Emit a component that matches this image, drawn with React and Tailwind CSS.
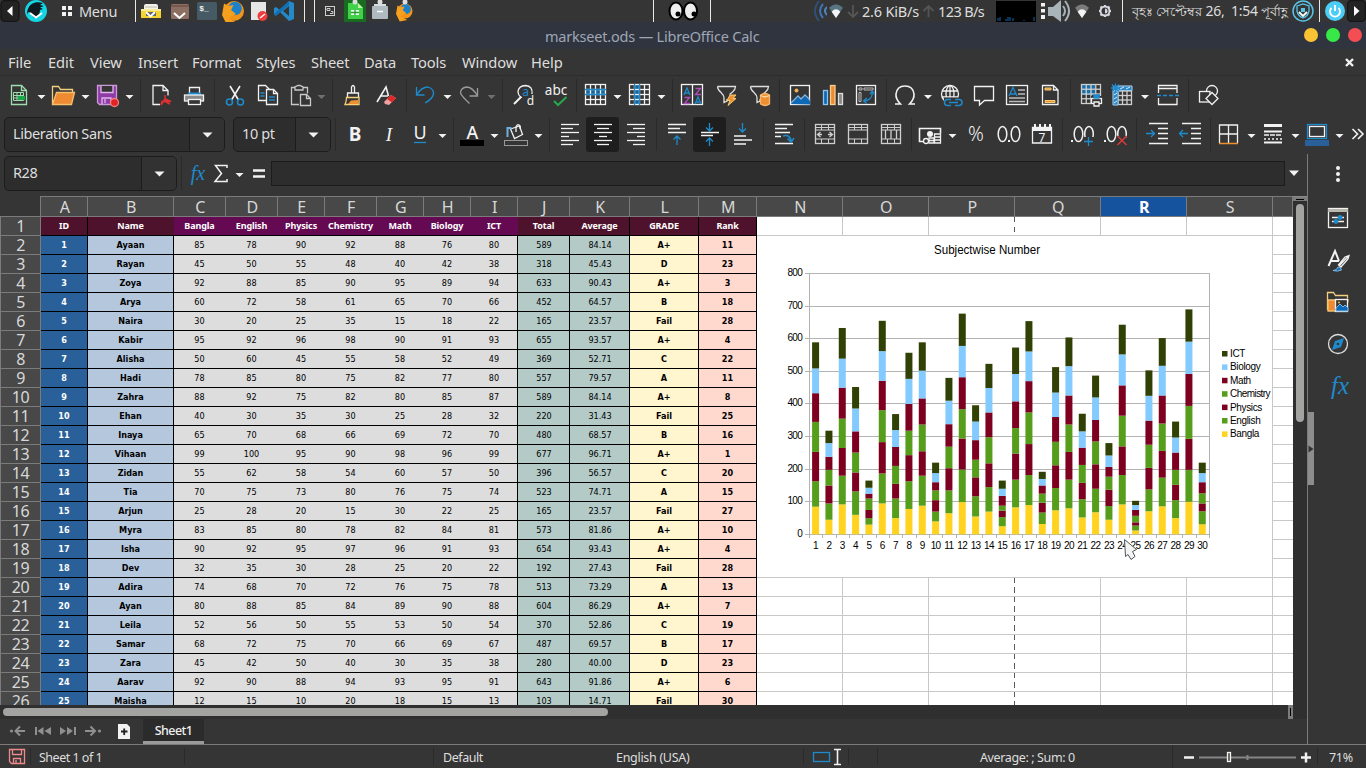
import React from "react";

const W = "#f2f2f2";
const B = "#1e8bcd";

/* A run of adjacent toolbar slots. Every slot ends at its `to` value and the
   drawings inside share the strip's coordinate system. */
function Strip({ from, top, h, items }) {
  let x = from;
  return (
    <div className="flex shrink-0">
      {items.map(([to, node], i) => {
        const start = x;
        x = to;
        return (
          <svg
            key={i}
            className="block shrink-0"
            width={to - start}
            height={h}
            viewBox={`${start} ${top} ${to - start} ${h}`}
            fill="none"
            stroke={W}
            strokeWidth="1.3"
          >
            {node}
          </svg>
        );
      })}
    </div>
  );
}

const Drop = ({ x, y = 96, c = W }) => (
  <path d={`M${x - 4} ${y - 1}h8l-4 4z`} fill={c} stroke="none" />
);
const Sep = ({ x, y, h }) => (
  <path d={`M${x + 0.5} ${y}v${h}`} stroke="#2a2a2a" strokeWidth="1" />
);
const T = ({ x, y, s, c = W, children, w = 400, f = "Noto Sans", ...p }) => (
  <text x={x} y={y} fontSize={s} fill={c} stroke="none" fontWeight={w} fontFamily={`"${f}", sans-serif`} textAnchor="middle" {...p}>
    {children}
  </text>
);
const sep1 = (x) => <Sep x={x} y={79} h={33} />;
const sep2 = (x) => <Sep x={x} y={118} h={33} />;

/* ---------- desktop panel ---------- */
const PSep = ({ x }) => <path d={`M${x + 0.5} 0v22`} stroke="#e8e8e8" strokeWidth="1" />;
const Firefox = ({ x, y, r }) => (
  <g stroke="none">
    <circle cx={x} cy={y} r={r} fill="#f39318" />
    <circle cx={x + r * 0.1} cy={y - r * 0.25} r={r * 0.68} fill="#1d80c8" />
    <path d={`M${x - r} ${y - r * 0.75}l${r * 0.45} ${r * 0.25} ${r * 0.5} -${r * 0.1} -${r * 0.25} ${r * 0.5} ${r * 0.5} ${r * 0.4} -${r * 0.8} ${r * 0.4} ${r * 0.9} ${r * 0.5} -${r} ${r * 0.2} -${r * 0.5} -${r}z`} fill="#f6a01e" />
  </g>
);
const Wifi = ({ x, y, r, c = "#bfc6c9" }) => (
  <g stroke="none">
    <path d={`M${x} ${y + r}L${x - r} ${y - r * 0.45}Q${x} ${y - r * 1.5} ${x + r} ${y - r * 0.45}z`} fill={c} opacity="0.6" />
    <path d={`M${x} ${y + r}L${x - r * 0.62} ${y + r * 0.1}Q${x} ${y - r * 0.6} ${x + r * 0.62} ${y + r * 0.1}z`} fill="#f4f4f4" />
  </g>
);

const panelLeft = [
  [22, <g><rect x="1" y="0.5" width="18" height="21" rx="4" fill="#232323" stroke="#161616" /><path d="M7 11l5.500-5v10z" fill="#fff" stroke="none" /></g>],
  [54, <g stroke="none"><circle cx="36" cy="11" r="11" fill="#13d5e3" /><path d="M28 9c2-6 8-8 15-6l-3 2 4 1-4 1.500 3 1.500-3 1c0 4-2 7-5 8-3-1-3-5-6-6-1 0-2 2-2 3 0-2 0-4 1-6z" fill="#101820" /><path d="M30 13l6 4.500 6-4.500" stroke="#fff" strokeWidth="2" fill="none" /></g>],
  [78, <g fill={W} stroke="none"><path d="M62 6h4v4h-4zM68 6h4v4h-4zM62 12h4v4h-4zM68 12h4v4h-4z" /></g>],
];
const panelApps = [
  [137, <PSep x={135} />],
  [165, <g stroke="none"><rect x="144" y="4" width="14" height="8" rx="2" fill="#f2f2ea" /><path d="M145 7h12" stroke="#c8c8b8" /><path d="M141 9h20v9h-20z" fill="#f4d431" /><path d="M141 9h20v2h-20z" fill="#f7ea9a" /><rect x="146" y="12" width="10" height="4" fill="#666" /><path d="M146 12l4.500 4.500 4.500-4.500" stroke="#fff" strokeWidth="1.800" fill="none" /></g>],
  [193, <g stroke="none"><rect x="171" y="4" width="18" height="15" rx="1.500" fill="#8d6e63" /><path d="M171 6h18" stroke="#6d4c41" /><path d="M174 13l5.500 5 5.500-5" stroke="#fff" strokeWidth="2" fill="none" /></g>],
  [220, <g stroke="none"><rect x="197" y="2" width="20" height="18" rx="1.500" fill="#455a64" /><T x={204} y={11} s={8} w={700} f="Liberation Mono">$_</T></g>],
  [247, <Firefox x={234} y={11} r={10} />],
  [271, <g stroke="none"><path d="M251 2h15v18h-15z" fill="#e6e6e6" /><circle cx="262.500" cy="16" r="5" fill="#ee3b3b" /><path d="M260 18l5-4" stroke="#fff" strokeWidth="1.500" /></g>],
  [299, <g stroke="none"><path d="M289 1l5 2v16l-5 2-9-9-4 3-2-1 0-6 2-1 4 3z" fill="#2489ca" /><path d="M274 15l2 1 13-11v-4l-14 12z" fill="#1070b3" /><path d="M289 6l-6 5 6 5z" fill="#353535" /></g>],
  [309, <PSep x={304} />],
  [320, <PSep x={314} />],
  [341, <g strokeWidth="1" stroke="#cfcfcf"><rect x="325.500" y="6.500" width="9" height="9" /><path d="M327 8.500h3v2h-3zM331 11.500h2v2h-3" /></g>],
  [369, <g stroke="none"><rect x="344" y="0" width="22" height="22" fill="#196b1f" /><path d="M348 3h10l5 5v11h-15z" fill="#3fd24a" /><path d="M358 3l5 5h-5z" fill="#bdf2a8" /><rect x="351" y="10" width="8" height="5" fill="#e9ffe9" /><path d="M351 12.500h8M355 10v5" stroke="#2a9a33" /><circle cx="355" cy="2" r="2.500" fill="#ddd" /></g>],
  [393, <g stroke="none"><path d="M374 4h12v3h-12z" fill="#d5dde0" /><rect x="372" y="6" width="16" height="13" rx="1" fill="#aebac0" /><path d="M377 11.500h6" stroke="#fff" strokeWidth="1.500" /><circle cx="380" cy="2" r="2.500" fill="#ddd" /></g>],
  [420, <g><Firefox x={405} y={11} r={7.5} /><circle cx="405" cy="2" r="2.500" fill="#ddd" stroke="none" /></g>],
];
const Eye = ({ x, px }) => (
  <g>
    <ellipse cx={x} cy="11" rx="6.500" ry="8.500" fill="#eee" stroke="#000" strokeWidth="2" />
    <circle cx={px} cy="14" r="2.500" fill="#000" stroke="none" />
  </g>
);
const panelEyes = [
  [656, <PSep x={653} />],
  [708, <g><Eye x={676} px={678} /><Eye x={690.5} px={694} /></g>],
  [812, <PSep x={710} />],
  [827, <g stroke="#2d5c94" strokeWidth="2"><path d="M819 1q-8 10 0 20" opacity="0.700" /><path d="M823 4q-6 7 0 14" stroke="#3c74b4" /><path d="M827 7q-4 4 0 8" stroke="#4a86c6" /></g>],
  [845, <Wifi x={836} y={11} r={7} c="#6fa0b4" />],
  [861, <path d="M853 5v12M848 12l5 5 5-5" stroke="#555" strokeWidth="1.800" />],
];
const panelUp = [[938, <path d="M928.500 17V6M923.500 11l5-5 5 5" stroke="#555" strokeWidth="1.800" />]];
const panelTray = [
  [1038, <g stroke="none"><rect x="996" y="1" width="40" height="21" fill="#000" /><path d="M998 21v-3M1000 21v-4M1006 21v-2M1008 21v-4M1010 21v-4M1013 21v-3M1024 21v-1M1034 21v-4" stroke="#1565a5" strokeWidth="1" /></g>],
  [1072, <g stroke="none"><path d="M1041 3h4v3.500h-4zM1041 9h4v3.500h-4zM1041 15h4v4h-4z" fill={W} /><path d="M1048 7h5l8-7v22l-8-6h-5z" fill="#a9b4ba" /><path d="M1063 6q4 5 0 10M1065 1q8 10 0 20" stroke="#a9b4ba" strokeWidth="2" fill="none" /></g>],
  [1094, <Wifi x={1082} y={11} r={7} c="#aaa" />],
  [1118, <g stroke="#d8d8e0" strokeWidth="2"><circle cx="1105" cy="11" r="4.500" /><path d="M1105 5v1M1105 16v1M1099 11h1M1110 11h1M1100.500 6.500l1 1M1108.500 14.500l1 1M1109.500 6.500l-1 1M1101.500 14.500l-1 1" /><path d="M1105 8.500a2.500 2.500 0 0 1 0 5z" fill="#d8d8e0" stroke="none" /></g>],
  [1131, <PSep x={1122} />],
];
const panelEnd = [
  [1317, <g><circle cx="1303" cy="11" r="10" stroke="#58c4e6" strokeWidth="1.500" /><path d="M1297 6l6-2 6 2v5q-1 5-6 7-5-2-6-7z" stroke="#58c4e6" /><path d="M1301 8h4v4h-4z" fill="#58c4e6" stroke="none" /><path d="M1299 12l4 4 4-4" stroke="#fff" strokeWidth="1.800" /></g>],
  [1322, <PSep x={1319} />],
  [1346, <g><circle cx="1335" cy="11" r="10" fill="#4dcdf6" stroke="none" /><path d="M1331.500 8a5 5 0 1 0 7 0M1335 5v6" stroke="#fff" strokeWidth="1.800" /></g>],
  [1366, <g><rect x="1347.500" y="0.500" width="18" height="21" rx="4" fill="#232323" stroke="#161616" /><path d="M1354 6l5.500 5-5.500 5z" fill="#fff" stroke="none" /></g>],
];

/* ---------- standard toolbar ---------- */
const Grid = ({ x, y, w, h, nx, ny }) => (
  <g>
    <rect x={x} y={y} width={w} height={h} />
    {Array.from({ length: nx - 1 }, (_, i) => <path key={"v" + i} d={`M${x + ((i + 1) * w) / nx} ${y}v${h}`} />)}
    {Array.from({ length: ny - 1 }, (_, i) => <path key={"h" + i} d={`M${x} ${y + ((i + 1) * h) / ny}h${w}`} />)}
  </g>
);
const Funnel = ({ x }) => (
  <path d={`M${x} 86.500h18q0 3-3 5.500l-3 2.500M${x} 86.500q0 3 3.500 6 3 3 3 5v5l3-1.500v-2`} stroke="#ddd" />
);
const tools1 = [
  [33, <g><path d="M11.500 85.500h10l5 5v14h-15z" stroke="#9fdcae" /><path d="M21.500 85.500v5h5" stroke="#9fdcae" /><g stroke="#9fdcae" strokeWidth="1"><path d="M13.500 92.500h10v8h-10zM13.500 95.500h10M13.500 98h10M17 92.500v8M20.500 92.500v8" /></g><path d="M18 96h7v4h-7z" fill="#17a64a" stroke="none" /></g>],
  [49, <Drop x={41.5} />],
  [77, <g><path d="M52.500 104v-17.500h6l2 3h12v3" stroke="#f4d07e" /><path d="M52.500 104.500l4-12h18l-3 12z" fill="#ee8a31" stroke="#f4c06e" /></g>],
  [93, <Drop x={85.5} />],
  [121, <g><path d="M97.500 85.500h19v19h-17l-2-2z" fill="#8f3aa6" stroke="#c99ad6" /><path d="M101 86v6.500h12v-6.500" fill="#353535" stroke="#e0b8ea" /><path d="M102 104v-6h9v6" stroke="#e0b8ea" /><path d="M105 99v4" stroke="#e0b8ea" /><circle cx="114.500" cy="102.500" r="4" fill="#e02323" stroke="#f08080" /></g>],
  [137, <Drop x={129.5} />],
  [143, sep1(140)],
  [176, <g><path d="M160 104.500h-7v-19h10l5 5v5M163 85.500v5h5" /><path d="M165 95v4l-4 6M165 99l6 2.500h-9l-1 3.500M165 99q1 4 5 5" stroke="#e03030" strokeWidth="1.500" /></g>],
  [208, <g><path d="M189.500 95v-7.500h10v7.500" /><path d="M188 92.500h13v3h-13z" fill={B} stroke="none" /><rect x="184.500" y="95" width="19" height="6" fill="#8a8a8a" /><rect x="188.500" y="99.500" width="12" height="5" fill="#353535" /></g>],
  [217, sep1(214)],
  [250, <g><path d="M230 86l8.500 14M240 86l-8.500 14" strokeWidth="1.600" /><circle cx="229.500" cy="102" r="3" stroke={B} strokeWidth="1.600" /><circle cx="240.500" cy="102" r="3" stroke={B} strokeWidth="1.600" /></g>],
  [284, <g><path d="M266 100.500h-7.500v-15h7l5 5" /><path d="M266.500 89.500h7l4 4v11h-11z" fill="#353535" /><path d="M273.500 89.500v4h4" /><path d="M260.500 93h4M260.500 96h4M269 97h6M269 100h6" stroke={B} /></g>],
  [314, <g stroke="#c8c8c8"><path d="M299 104.500h-7.500v-17h3.500M303 87.500h4.500v6" /><path d="M295 90v-3l3-1.500h2l3 1.500v3z" /><path d="M300.500 94.500h6l4 4v7h-10z" fill="#353535" /><path d="M306.500 94.500v4h4" /></g>],
  [329, <Drop x={321.5} c="#707070" />],
  [337, sep1(332)],
  [370, <g><path d="M351.500 93v-6q1.500-3 3 0v6" /><path d="M347.500 97v-4h11v4" /><path d="M346.500 97.500h12.500v7h-14q1.500-3 1.500-7z" fill="#353535" stroke="#f5d07a" /><path d="M351 100.500l-3 3.500h10v-4z" fill="#ee9030" stroke="none" /></g>],
  [403, <g><path d="M377 102l9-15 2.500 9M381 96h7" strokeWidth="1.600" /><path d="M384 102l7-7 5 3-7 7-4-1z" fill="#f0a0a0" stroke="none" /><path d="M387 99l4-4 5 3-4 4.500z" fill="#e02828" stroke="none" /></g>],
  [410, sep1(406)],
  [439, <g stroke={B}><path d="M416.500 87v8h8" /><path d="M416.500 95q5-8 11.500-8 6 2 5.500 7-1 5-8.500 9" /></g>],
  [455, <Drop x={447.5} />],
  [483, <g stroke="#9a9a9a"><path d="M477.500 88v8h-8" /><path d="M477.500 96q-5-9-11-9-6 1-6 6 1 3 9 10.500" /></g>],
  [499, <Drop x={491.5} c="#707070" />],
  [507, sep1(502)],
  [540, <g><path d="M532 94q1-8-6.500-8.500-7 .5-7.500 6 .5 5 4 6" /><path d="M521 97l-7 7" strokeWidth="2" /><T x={525.5} y={95.500} s={12} c={B}>a</T><T x={530.5} y={104.500} s={12}>d</T></g>],
  [571, <g><T x={556} y={95} s={13.5}>abc</T><path d="M554 101l4 4 8.500-8" stroke="#27a84a" strokeWidth="2" /></g>],
  [580, sep1(576)],
  [610, <g><path d="M586 89.500h20v5h-20z" fill="#1a659b" stroke="none" /><Grid x={585.5} y={84.5} w={20} h={20} nx={4} ny={4} /><path d="M585 89.500h21M585 94.500h21" stroke={B} /></g>],
  [626, <Drop x={617.5} />],
  [654, <g><path d="M635 85h5v20h-5z" fill="#1a659b" stroke="none" /><Grid x={629.5} y={84.5} w={20} h={20} nx={4} ny={4} /><path d="M634.500 84v21M639.500 84v21" stroke={B} /></g>],
  [669, <Drop x={661.5} />],
  [676, sep1(672)],
  [709, <g><rect x="681.500" y="84.500" width="21" height="20" /><path d="M692.500 85v20" /><path d="M684 95l3-7 3 7M685 93h4M695 104l3-7 3 7M696 102h4" stroke={B} /><path d="M684.500 97.500h5l-5 6h5.500M695.500 88.500h5l-5 6h5.500" stroke="#b050c0" /></g>],
  [743, <g><Funnel x={717.5} /><path d="M730 95h6l-3 3.500h3l-8 7 2-5h-3z" fill="#ee9030" stroke="#f6cf74" strokeWidth="1" /></g>],
  [775, <g><Funnel x={750.5} /><path d="M760.500 95q4.500-3 9 0v9q-4.500 3-9 0z" fill="#ee9030" stroke="#f6b56a" /><path d="M760.500 95.500q4.500 2.500 9 0" stroke="#fbd7a0" /></g>],
  [783, sep1(779)],
  [816, <g><rect x="790.500" y="85.500" width="19" height="19" fill="#353535" /><path d="M791 104l7-7 3 3 4-4 5 5v3.500z" fill="#0d69b5" stroke="none" /><path d="M791 103l7-7 3 3 4-4 5 5" stroke="#7db8e8" /><circle cx="796.500" cy="90.500" r="2" fill="#f0b050" stroke="none" /></g>],
  [849, <g><rect x="823.500" y="90.500" width="4" height="14" fill="#0d69b5" stroke="#8dc4ee" /><rect x="830.500" y="85.500" width="4.500" height="19" fill="#ee8a31" stroke="#f6cf94" /><rect x="838.500" y="93.500" width="4" height="11" fill="#888" stroke="#ddd" /></g>],
  [880, <g><rect x="856.500" y="85.500" width="19" height="19" /><path d="M859 88h3v2h-3zM864 88h9v2h-9zM859 92.500h2v9h-2z" stroke="#bbb" strokeWidth="1" /><path d="M864 101q8 0 8.500-9M870 94l2.500-3 2 3.500M867 98l-3.500 3 3.500 2.500" stroke={B} /></g>],
  [889, sep1(886)],
  [920, <path d="M895 104h5.500q-5-5-4.500-10 1-8 9-8t9 8q.5 5-4.500 10h5.500" strokeWidth="1.600" />],
  [936, <Drop x={928} />],
  [967, <g><circle cx="950" cy="94" r="8.500" /><ellipse cx="950" cy="94" rx="4" ry="8.500" /><path d="M950 85.500v17M942 91h16M942 97h16" /><path d="M944 97.500h20v9h-20z" fill="#353535" stroke="none" /><path d="M951 99.500h-3.500q-3 0-3 3t3 3h3.500M955 99.500h4q3 0 3 3t-3 3h-4M949 102.500h9" stroke={B} strokeWidth="1.500" /></g>],
  [1000, <path d="M974.500 86.500h19v14h-9l-5 4.500v-4.500h-5z" />],
  [1033, <g><rect x="1006.500" y="85.500" width="21" height="19" /><path d="M1018 90h7M1018 94h7M1009 98h16M1009 101.500h16" stroke="#bbb" /><path d="M1009 96l4-8.500 4 8.500M1010.500 94h5" stroke={B} /></g>],
  [1064, <g><path d="M1042.500 85.500h11l4.500 4.500v14.500h-15.500zM1053.500 85.500v4.500h4.500" /><path d="M1045 88h6v2h-6zM1045 100.500h10v2h-10z" fill="#ee9030" stroke="#f6cf74" strokeWidth="1" /></g>],
  [1074, sep1(1070)],
  [1107, <g><path d="M1081 85h14v10h-14z" fill="#1a6fa8" stroke="none" /><g stroke="#cfcfcf"><Grid x={1081.5} y={84.5} w={19} h={19} nx={4} ny={4} /></g><path d="M1091 96h11v10h-11z" fill="#353535" stroke="none" /><rect x="1091.500" y="98.500" width="10" height="5" /><path d="M1094 98v-3h5v3z" fill={B} stroke={B} /><path d="M1094 102h5v4h-5z" fill="#353535" /></g>],
  [1137, <g><g stroke="#cfcfcf"><Grid x={1113.5} y={86.5} w={18} h={18} nx={4} ny={4} /></g><path d="M1118 86h14v4.500h-14zM1113 91h5v14h-5z" fill="#2b86c6" stroke="#9cc8ea" strokeWidth="1" /><path d="M1120 89l4-2M1126 89l4-2M1114 95l3-2M1114 99l3-2M1114 103l3-2" stroke="#d8ecfa" strokeWidth="1" /><path d="M1111 88h9M1115.500 83.500v9M1112 84.500l7 7M1119 84.500l-7 7" stroke="#1e8bcd" /></g>],
  [1153, <Drop x={1145} />],
  [1182, <g><path d="M1158.500 93v-7.500h18.500v7.500M1158.500 98v6.500h18.500v-6.500M1158 88.500h19" /><path d="M1157 95.500h22" stroke={B} strokeDasharray="4 2" /></g>],
  [1192, sep1(1188)],
  [1307, <g><circle cx="1212" cy="91" r="5.500" /><rect x="1199.500" y="91.500" width="10.500" height="10.500" fill="#353535" /><path d="M1212 92.500l6 6-6 6-6-6z" fill="#353535" /></g>],
];

/* ---------- formatting toolbar ---------- */
const lines = (x, y, ws, align) =>
  ws.map((w, i) => {
    const sx = align === "c" ? x - w / 2 : align === "r" ? x + 9 - w : x - 9;
    return <path key={i} d={`M${sx} ${y + i * 4}h${w}`} />;
  });
const MergeIc = ({ x, children }) => (
  <g stroke="#cfcfcf">
    <rect x={x - 9.5} y="124.500" width="19" height="19" />
    <path d={`M${x - 9.5} 130h19M${x - 9.5} 139h19M${x - 9.5} 127.500h19M${x - 3.5} 124.500v5.500M${x + 3.5} 124.500v5.500M${x - 3.5} 139v4.500M${x + 3.5} 139v4.500`} strokeWidth="1" />
    {children}
  </g>
);
/* Narrow zero used by the decimal-place buttons */
const Zero = ({ x }) => <ellipse cx={x} cy="134" rx="4.300" ry="7.600" strokeWidth="1.500" />;
const tools2 = [
  [339, sep2(335)],
  [371, <T x={355} y={141} s={19} w={700}>B</T>],
  [404, <T x={389} y={141} s={19} f="Liberation Serif" fontStyle="italic">I</T>],
  [434, <g><T x={420} y={139} s={18}>U</T><path d="M414 142.500h12" stroke={B} /></g>],
  [450, <Drop x={442.5} y={135} />],
  [457, sep2(453)],
  [487, <g><T x={472.5} y={138.5} s={18} w={500}>A</T><path d="M460 140h24v6h-24z" fill="#000" stroke="none" /></g>],
  [503, <Drop x={494.5} y={135} />],
  [530, <g><path d="M510.500 129l9-3 3 8.500-8 4z" fill="#353535" /><path d="M516 132v-5q1-3 3-2t1 4" /><path d="M507.500 137v-9h4" stroke="#6db1e4" strokeWidth="2" /><rect x="504.500" y="140.500" width="23" height="5" fill="#353535" stroke="#999" strokeWidth="1" /></g>],
  [546, <Drop x={538.5} y={135} />],
  [553, sep2(549)],
  [586, <g>{lines(570, 124.5, [18, 12, 18, 8, 18, 12], "l")}</g>],
  [619, <g><rect x="586" y="117" width="33" height="35" rx="3" fill="#1e1e1e" stroke="none" />{lines(603, 124.5, [18, 12, 18, 8, 18, 12], "c")}</g>],
  [652, <g>{lines(636, 124.5, [18, 12, 18, 8, 18, 12], "r")}</g>],
  [660, sep2(656)],
  [693, <g><path d="M668 124.500h18M668 128.500h12M668 132.500h18" /><path d="M677 145v-9M673.500 139.500l3.500-3.500 3.500 3.500" stroke={B} /></g>],
  [726, <g><rect x="693" y="117" width="33" height="35" rx="3" fill="#1e1e1e" stroke="none" /><path d="M701 132.500h18M701 135.500h12" /><path d="M709.500 123v8M706 127.500l3.500 3.500 3.500-3.500M709.500 146v-8M706 141.500l3.500-3.500 3.500 3.500" stroke={B} /></g>],
  [759, <g><path d="M734 136h12M734 140h18M734 144h12" /><path d="M742.500 123v9M739 128.500l3.500 3.500 3.500-3.500" stroke={B} /></g>],
  [767, sep2(763)],
  [800, <g><path d="M775 124.500h18M775 128.500h12M775 132.500h15M775 136.500h6M775 143.500h18" /><path d="M783 136q7-2 8 5M787.500 138.500l3.500 3.500 3-4" stroke={B} strokeWidth="1.500" /></g>],
  [808, sep2(804)],
  [842, <MergeIc x={825}><path d="M818 134.500h4M828 134.500h4M820.500 132l-3 2.500 3 2.500M829.500 132l3 2.500-3 2.500" /></MergeIc>],
  [875, <MergeIc x={858} />],
  [907, <MergeIc x={891}><path d="M885.500 130v9M891 130v9M896.500 130v9" /></MergeIc>],
  [915, sep2(911)],
  [943, <g><path d="M926 141.500h-6.500v-13h21v5" strokeWidth="1.600" /><circle cx="930" cy="134" r="3" fill={W} stroke="none" /><circle cx="926" cy="141" r="2.500" fill="#353535" /><path d="M929 138h5v5h-5zM934.500 134h6v9h-6zM934.500 137h6M934.500 140h6M929 140.500h5" fill="#353535" /></g>],
  [961, <Drop x={952.5} y={135} />],
  [993, <T x={976} y={141} s={19.5} w={300}>%</T>],
  [1026, <g><Zero x={1002.5} /><Zero x={1015.5} /><path d="M1008 140h2v2h-2z" fill={W} stroke="none" /></g>],
  [1058, <g><path d="M1032.500 127.500h19v15.500h-19z" /><path d="M1032 127h20v4h-20zM1034 124h2v3h-2zM1039 124h2v3h-2zM1044 124h2v3h-2zM1049 124h2v3h-2z" fill={W} stroke="none" /><T x={1042} y={142} s={12}>7</T></g>],
  [1066, sep2(1062)],
  [1099, <g><path d="M1071 140h2v2h-2z" fill={W} stroke="none" /><Zero x={1078.5} /><Zero x={1089} /><path d="M1084 137h10v9h-10z" fill="#353535" stroke="none" /><path d="M1084 141.500h9M1088.500 137v9" stroke={B} /></g>],
  [1132, <g><path d="M1104 140h2v2h-2z" fill={W} stroke="none" /><Zero x={1111.5} /><Zero x={1122} /><path d="M1116.500 136h10v9h-10z" fill="#353535" stroke="none" /><path d="M1117.500 136l9 9M1126.500 136l-9 9" stroke="#e23b3b" /></g>],
  [1140, sep2(1136)],
  [1174, <g><path d="M1149 123.500h19M1158 128.500h10M1158 133.500h10M1158 138.500h10M1149 143.500h19" /><path d="M1146 133.500h8M1151 130l3.500 3.500-3.500 3.500" stroke={B} /></g>],
  [1206, <g><path d="M1182 123.500h19M1191 128.500h10M1191 133.500h10M1191 138.500h10M1182 143.500h19" /><path d="M1180 133.500h8M1183 130l-3.500 3.500 3.500 3.500" stroke={B} /></g>],
  [1214, sep2(1210)],
  [1244, <g><path d="M1219.500 143v-18h18v18M1219.500 134h18M1228.500 125v18" /><path d="M1219 143.500h19" stroke="#ee9030" strokeWidth="1.500" /></g>],
  [1260, <Drop x={1251.5} y={135} />],
  [1288, <g><path d="M1264 125.500h18" strokeWidth="3" /><path d="M1264 131.500h18" strokeWidth="2" /><path d="M1264 135h18" strokeDasharray="5 1" /><path d="M1264 139h18" strokeDasharray="2 2" /><path d="M1264 142.500h18" strokeWidth="2" /></g>],
  [1304, <Drop x={1295.5} y={135} />],
  [1331, <g><path d="M1305 140h24v6h-24z" fill="#2a6099" stroke="none" /><rect x="1307.500" y="124.500" width="19" height="14" stroke={B} /><rect x="1309.500" y="126.500" width="15" height="10" /></g>],
  [1347, <Drop x={1339.5} y={135} />],
  [1366, <path d="M1352.500 129l5 5-5 5M1358 129l5 5-5 5" strokeWidth="1.600" />],
];
const formulaTools = [
  [184, <Sep x={181} y={156} h={34} />],
  [211, <T x={198} y={180} s={20} c={B} f="Liberation Serif" fontStyle="italic">fx</T>],
  [232, <path d="M227 168v-2.500h-11.500l6 8-6.500 8h12v-2.500" strokeWidth="1.500" />],
  [248, <Drop x={239.5} y={174} />],
  [271, <path d="M253 170.500h12M253 176.500h12" strokeWidth="2.500" />],
];

/* ---------- sheet data ---------- */
const names = "Ayaan,Rayan,Zoya,Arya,Naira,Kabir,Alisha,Hadi,Zahra,Ehan,Inaya,Vihaan,Zidan,Tia,Arjun,Myra,Isha,Dev,Adira,Ayan,Leila,Samar,Zara,Aarav,Maisha".split(",");
const grades = "A+,D,A+,B,Fail,A+,C,A,A+,Fail,B,A+,C,A,Fail,A+,A+,Fail,A,A+,C,B,D,A+,Fail".split(",");
const ranks = [11, 23, 3, 18, 28, 4, 22, 11, 8, 25, 16, 1, 20, 15, 27, 10, 4, 28, 13, 7, 19, 17, 23, 6, 30];
const marks = [
  [85, 78, 90, 92, 88, 76, 80], [45, 50, 55, 48, 40, 42, 38], [92, 88, 85, 90, 95, 89, 94],
  [60, 72, 58, 61, 65, 70, 66], [30, 20, 25, 35, 15, 18, 22], [95, 92, 96, 98, 90, 91, 93],
  [50, 60, 45, 55, 58, 52, 49], [78, 85, 80, 75, 82, 77, 80], [88, 92, 75, 82, 80, 85, 87],
  [40, 30, 35, 30, 25, 28, 32], [65, 70, 68, 66, 69, 72, 70], [99, 100, 95, 90, 98, 96, 99],
  [55, 62, 58, 54, 60, 57, 50], [70, 75, 73, 80, 76, 75, 74], [25, 28, 20, 15, 30, 22, 25],
  [83, 85, 80, 78, 82, 84, 81], [90, 92, 95, 97, 96, 91, 93], [32, 35, 30, 28, 25, 20, 22],
  [74, 68, 70, 72, 76, 75, 78], [80, 88, 85, 84, 89, 90, 88], [52, 56, 50, 55, 53, 50, 54],
  [68, 72, 75, 70, 66, 69, 67], [45, 42, 50, 40, 30, 35, 38], [92, 90, 88, 94, 93, 95, 91],
  [12, 15, 10, 20, 18, 15, 13], [71, 67, 66, 71, 74, 76, 78], [86, 88, 82, 84, 86, 91, 85],
  [50, 55, 47, 46, 53, 46, 49], [100, 98, 95, 101, 98, 99, 99], [31, 40, 24, 31, 34, 28, 32],
];
const cols = [
  ["A", "w-[47px]"], ["B", "w-[86px]"], ["C", "w-[52px]"], ["D", "w-[52px]"], ["E", "w-[47px]"],
  ["F", "w-[52px]"], ["G", "w-[47px]"], ["H", "w-[47px]"], ["I", "w-[47px]"], ["J", "w-[52px]"],
  ["K", "w-[60px]"], ["L", "w-[69px]"], ["M", "w-[58px]"], ["N", "w-[86px]"], ["O", "w-[86px]"],
  ["P", "w-[86px]"], ["Q", "w-[86px]"], ["R", "w-[86px]"], ["S", "w-[86px]"], ["", "w-[20px]"],
];
const heads = ["ID", "Name", "Bangla", "English", "Physics", "Chemistry", "Math", "Biology", "ICT", "Total", "Average", "GRADE", "Rank"];

const cellTone = (c) => {
  if (c === 0) return "bg-[#2a6099] text-white font-bold border-r border-black";
  if (c === 1) return "bg-[#b4c7dc] text-black font-bold border-r border-black";
  if (c < 8) return "bg-[#dddddd] text-black pr-px";
  if (c === 8) return "bg-[#dddddd] text-black border-r border-black";
  if (c < 11) return "bg-[#b3cac7] text-black border-r border-black pl-[1px]";
  if (c === 11) return "bg-[#fff5ce] text-black font-bold border-r border-black";
  return "bg-[#ffd8ce] text-black font-bold border-r border-black";
};
const headTone = (c) => {
  if (c >= 2 && c <= 8) return "bg-[#650953] pr-px";
  if (c === 9 || c === 1) return "bg-[#4f122c] pr-px";
  return "bg-[#4f122c] border-r border-black";
};

function SheetRow({ n }) {
  const m = marks[n - 2];
  const total = m && m.reduce((a, b) => a + b, 0);
  const values = n === 1 ? heads : [n - 1, names[n - 2], ...m, total, (total / 7).toFixed(2), grades[n - 2], ranks[n - 2]];
  return (
    <div className="flex h-[19px] shrink-0">
      <div className="flex w-[41px] shrink-0 items-center justify-center border-r border-b border-l border-[#7b7b7b] bg-[#484848] text-[16px] leading-none tracking-[-0.5px] text-[#d8d8d8]">
        {n}
      </div>
      {cols.map(([id, w], c) =>
        c < 13 ? (
          <div
            key={c}
            className={`${w} ${n === 1 ? headTone(c) + " font-['Noto_Sans'] font-bold text-white text-[9px] tracking-[-0.12px] pb-[2px]" : cellTone(c) + " font-['DejaVu_Sans_Condensed','DejaVu_Sans'] [font-stretch:condensed] text-[9px]"} flex shrink-0 items-center justify-center border-b border-b-black leading-none`}
          >
            {values[c]}
          </div>
        ) : (
          <div key={c} className={`${w} shrink-0 border-b border-[#c8c8c8] bg-white ${id === "P" || id === "" ? "" : "border-r"}`} />
        )
      )}
    </div>
  );
}

const seriesColors = ["#ffd320", "#579d1c", "#7e0021", "#579d1c", "#7e0021", "#83caff", "#314004"];
const legend = [["ICT", 6], ["Biology", 5], ["Math", 4], ["Chemistry", 3], ["Physics", 2], ["English", 1], ["Bangla", 0]];

function Chart() {
  const y = (v) => 534.4 - v * 0.3261;
  return (
    <svg className="absolute top-[40px] left-[757px] block bg-white" width="515" height="341" viewBox="757 236 515 341" fontFamily='"Liberation Sans", sans-serif'>
      <text x="934" y="254" fontSize="12" textLength="106" lengthAdjust="spacingAndGlyphs">Subjectwise Number</text>
      {[0, 100, 200, 300, 400, 500, 600, 700, 800].map((v) => (
        <g key={v}>
          <path d={`M805 ${Math.floor(y(v)) + 0.5}H1209.500`} stroke="#b3b3b3" />
          <text x="802" y={y(v) + 2.5} fontSize="10" textAnchor="end" letterSpacing="-0.700">{v}</text>
        </g>
      ))}
      <path d="M809.500 273V538M1209.500 273V534" stroke="#b3b3b3" fill="none" />
      {marks.map((m, i) => {
        const cx = 815.6 + i * 13.333;
        let sum = 0;
        return (
          <g key={i}>
            <path d={`M${Math.round(cx + 6.67) + 0.5} 534v4`} stroke="#b3b3b3" />
            {m.map((v, s) => {
              sum += v;
              return <rect key={s} x={cx - 3.5} y={y(sum)} width="7" height={v * 0.3261} fill={seriesColors[s]} />;
            })}
            <text x={cx} y="549" fontSize="10" textAnchor="middle" letterSpacing="-0.600">{i + 1}</text>
          </g>
        );
      })}
      {legend.map(([t, s], i) => (
        <g key={t}>
          <rect x="1222" y={351 + i * 13.4} width="5.500" height="5.500" fill={seriesColors[s]} />
          <text x="1230" y={357 + i * 13.4} fontSize="10" letterSpacing={t === "Chemistry" ? "-0.550" : "-0.350"}>{t}</text>
        </g>
      ))}
      <path d="M1124.500 539.500l12 10-4 2 2.500 5-4 3-3-5-2.500 2z" fill="#f4f4f4" stroke="#505558" strokeWidth="1" />
    </svg>
  );
}

const Combo = ({ box, label, arrow }) => (
  <div className={`${box} flex h-[35px] shrink-0 overflow-hidden rounded-[5px] border border-[#1c1c1c] bg-[#2d2d2d]`}>
    <div className="flex flex-1 items-center pb-px pl-2 text-[14.5px] tracking-[-0.4px] text-[#dedede]">{label}</div>
    <div className={`${arrow} flex items-center justify-center border-l border-[#1c1c1c] bg-[#323232]`}>
      <svg width="11" height="6" viewBox="0 0 11 6"><path d="M0.500 0.500h10l-5 5z" fill="#f2f2f2" /></svg>
    </div>
  </div>
);

const sidebar = [
  [196, <g fill={W} stroke="none"><circle cx="1338" cy="168" r="2" /><circle cx="1338" cy="174" r="2" /><circle cx="1338" cy="180" r="2" /></g>],
  [240, <g><rect x="1328.500" y="208.500" width="19" height="19" /><path d="M1328 210.500h20" strokeWidth="3" stroke="#b9b9ae" /><path d="M1332 217.500h12M1332 221.500h12" /><circle cx="1340" cy="217.500" r="1.800" fill={B} stroke={B} /><circle cx="1336" cy="221.500" r="1.800" fill={B} stroke={B} /></g>],
  [282, <g><path d="M1328.500 266l6.500-15 4 10M1331 261h8" strokeWidth="2" /><path d="M1348 256.500l-8.500 9M1345 257l4-1.500-1 3.500-7 8-2.500-2z" fill="#353535" /><path d="M1333 270.500q4 0 5-3.500 3 0 3.500 3-4 2-8.500.5z" fill="#1a6fb0" stroke="#7db8e8" strokeWidth="1" /></g>],
  [324, <g><path d="M1327.500 310v-17.500h6l2 3h12v3" stroke="#f4d07e" /><path d="M1328 311v-11h20l-2 11z" fill="#ee8a31" stroke="#f4c06e" /><rect x="1335.500" y="299.500" width="12" height="12" fill="#353535" /><path d="M1336 311v-3l4-4 3 3 2-2 3 3v3z" fill="#0d69b5" stroke="#7db8e8" strokeWidth="1" /><circle cx="1339" cy="302.500" r="1" fill="#f0b050" stroke="none" /></g>],
  [366, <g><circle cx="1338" cy="344" r="9.500" stroke="#ddd" /><path d="M1343 339l-2.500 7.500-7.500 2.500 2.500-7.500z" fill={B} stroke={B} /><circle cx="1338" cy="344" r="1.300" fill="#353535" stroke="none" /></g>],
  [410, <T x={1340} y={393.5} s={25} c={B} f="Liberation Serif" fontStyle="italic">fx</T>],
];

const menus = [
  ["File", "w-[40px]"], ["Edit", "w-[42px]"], ["View", "w-[48px]"], ["Insert", "w-[54px]"],
  ["Format", "w-[64px]"], ["Styles", "w-[55px]"], ["Sheet", "w-[53px]"], ["Data", "w-[47px]"],
  ["Tools", "w-[51px]"], ["Window", "w-[69px]"], ["Help", "w-[60px]"],
];

export default function App() {
  return (
    <div className="flex h-[768px] w-[1366px] flex-col overflow-hidden bg-[#353535] font-['Noto_Sans',sans-serif] text-[#dedede]">
      {/* desktop panel */}
      <div className="flex h-[22px] shrink-0 items-center whitespace-nowrap text-[15px] leading-[22px]">
        <Strip from={0} top={0} h={22} items={panelLeft} />
        <div className="w-[56px] shrink-0 pl-px text-[14.5px] tracking-[-0.3px]">Menu</div>
        <Strip from={134} top={0} h={22} items={panelApps} />
        <div className="w-[232px] shrink-0" />
        <Strip from={652} top={0} h={22} items={panelEyes} />
        <div className="w-[61px] shrink-0 pl-px text-[14.5px] tracking-[-0.2px]">2.6 KiB/s</div>
        <Strip from={922} top={0} h={22} items={panelUp} />
        <div className="w-[57px] shrink-0 text-[14.5px] tracking-[-0.6px]">123 B/s</div>
        <Strip from={995} top={0} h={22} items={panelTray} />
        <div className="w-[159px] shrink-0 pl-px text-[12.5px]">বৃহঃ সেপ্টেম্বর <span className="text-[14px] tracking-[-0.3px]">26,&nbsp; 1:54</span> পূর্বাহ্ণ</div>
        <Strip from={1290} top={0} h={22} items={panelEnd} />
      </div>

      {/* title bar */}
      <div className="grid h-[27px] shrink-0 grid-cols-[545px_auto_1fr] items-center bg-[#2f343f] text-[#9fa6b5]">
        <span />
        <span className="pt-[2px] text-[14.5px] tracking-[-0.2px] whitespace-nowrap">markseet.ods — LibreOffice Calc</span>
        <div className="flex justify-end gap-[8px] pr-[4px] pb-px">
          <span className="h-[14px] w-[14px] rounded-full bg-[#f9c333]" />
          <span className="h-[14px] w-[14px] rounded-full bg-[#37e846]" />
          <span className="h-[14px] w-[14px] rounded-full bg-[#f44d54]" />
        </div>
      </div>

      {/* menu bar */}
      <div className="flex h-[27px] shrink-0 items-center border-b border-[#2d2d2d] pl-2 text-[14.7px] tracking-[-0.1px]">
        {menus.map(([t, w]) => (
          <span key={t} className={`${w} shrink-0`}>{t}</span>
        ))}
        <svg className="mr-[12px] ml-auto" width="9" height="9" viewBox="0 0 9 9"><path d="M1 1l7 7M8 1l-7 7" stroke="#f2f2f2" strokeWidth="2.400" /></svg>
      </div>

      <div className="flex h-[40px] shrink-0">
        <Strip from={0} top={76} h={40} items={tools1} />
      </div>
      <div className="flex h-[38px] shrink-0 pt-px">
        <div className="flex w-[332px] shrink-0 gap-[8px] pl-[4px]">
          <Combo box="w-[221px]" label="Liberation Sans" arrow="w-[35px]" />
          <Combo box="w-[98px]" label="10 pt" arrow="w-[35px]" />
        </div>
        <Strip from={332} top={117} h={37} items={tools2} />
      </div>

      <div className="flex h-[590px] shrink-0">
        <div className="flex w-[1307px] shrink-0 flex-col">
          {/* formula bar */}
          <div className="flex h-[42px] shrink-0">
            <div className="w-[177px] shrink-0 pt-[2px] pl-[4px]">
              <Combo box="w-[173px]" label="R28" arrow="w-[35px]" />
            </div>
            <Strip from={177} top={154} h={42} items={formulaTools} />
            <div className="mt-[7px] h-[25px] w-[1014px] shrink-0 border border-[#1c1c1c] bg-[#2d2d2d]" />
            <Strip from={1285} top={154} h={42} items={[[1307, <path d="M1289 170.500h10l-5 5.500z" fill={W} stroke="none" />]]} />
          </div>

          {/* sheet */}
          <div className="flex h-[509px] shrink-0">
            <div className="relative flex w-[1293px] shrink-0 flex-col overflow-hidden">
              <div className="flex h-[21px] shrink-0">
                <div className="w-[41px] shrink-0 border-r border-b border-[#7b7b7b] bg-[#353535]" />
                {cols.map(([id, w]) => (
                  <div
                    key={id}
                    className={`${w} flex shrink-0 items-center justify-center border-t border-r border-b border-[#7b7b7b] pl-[1.5px] text-[16px] leading-none ${id === "R" ? "bg-[#15539e] font-bold text-white" : "bg-[#484848] text-[#d8d8d8]"}`}
                  >
                    {id}
                  </div>
                ))}
              </div>
              {Array.from({ length: 26 }, (_, i) => <SheetRow key={i} n={i + 1} />)}
              <div className="absolute top-[21px] left-[1014px] h-[488px] w-px bg-[repeating-linear-gradient(#5a5a5a_0px_5px,transparent_5px_9.5px)]" />
              <Chart />
            </div>
            <div className="flex w-[14px] shrink-0 flex-col items-center bg-[#2f2f2f]">
              <div className="flex h-[5px] w-full items-center justify-center border-t border-[#8a8a8a] bg-[#7b7b7b]"><div className="h-px w-[8px] bg-black" /></div>
              <div className="mt-[3px] h-[218px] w-[8px] rounded-full bg-[#a3a3a1]" />
            </div>
          </div>
          <div className="flex h-[14px] shrink-0 items-center bg-[#2f2f2f]">
            <div className="ml-[3px] h-[8px] w-[605px] rounded-full bg-[#a3a3a1]" />
            <div className="ml-auto flex h-full w-[5px] items-center justify-center bg-[#7b7b7b]"><div className="h-[8px] w-px bg-black" /></div>
            <div className="w-[14px]" />
          </div>

          {/* sheet tabs */}
          <div className="flex h-[25px] shrink-0">
            <Strip
              from={0}
              top={719}
              h={25}
              items={[
                [31, <g stroke="#8f8f8f" strokeWidth="2"><path d="M25 731h-9M20 726.500l-4.500 4.500 4.500 4.500" /><circle cx="11.500" cy="731" r="1.600" fill="#8f8f8f" stroke="none" /></g>],
                [56, <path d="M35 727h2v8h-2zM43.500 727v8l-6-4zM51 727v8l-6.500-4z" fill="#8f8f8f" stroke="none" />],
                [80, <path d="M60 727v8l6-4zM67 727v8l6-4zM74 727h2v8h-2z" fill="#8f8f8f" stroke="none" />],
                [108, <g stroke="#8f8f8f" strokeWidth="2"><path d="M85 731h10M90.500 726.500l4.500 4.500-4.500 4.500" /><circle cx="99.500" cy="731" r="1.600" fill="#8f8f8f" stroke="none" /></g>],
                [143, <g><path d="M118 724h9l3 3v12h-12z" fill={W} stroke="none" /><path d="M121 731.500h6.500M124.200 728.500v6.500" stroke="#222" strokeWidth="1.800" /></g>],
              ]}
            />
            <div className="flex w-[61px] items-center justify-center border-b-[3px] border-[#9a9a9a] bg-[#2b2b2b] pt-[2px] text-[12.5px] font-medium tracking-[-0.6px] text-[#f0f0f0]">Sheet1</div>
          </div>
        </div>

        {/* sidebar */}
        <div className="relative flex w-[59px] flex-col border-l border-[#7b7b7b]">
          {sidebar.map(([to, node], i) => {
            const start = i ? sidebar[i - 1][0] : 154;
            return (
              <svg key={i} className="block shrink-0" width="58" height={to - start} viewBox={`1308 ${start} 58 ${to - start}`} fill="none" stroke={W} strokeWidth="1.3">
                {node}
              </svg>
            );
          })}
          <div className="absolute top-[258px] left-0 flex h-[73px] w-[6px] items-center bg-[#8d8d8d]">
            <svg width="6" height="8" viewBox="0 0 6 8"><path d="M0.500 0.500l5 3.500-5 3.500z" fill="#333" /></svg>
          </div>
        </div>
      </div>

      {/* status bar */}
      <div className="flex h-[24px] shrink-0 items-center border-t border-[#7b7b7b] text-[12.5px] tracking-[-0.3px] whitespace-nowrap">
        <Strip from={0} top={745} h={23} items={[[39, <g><path d="M9.500 749.500h15v14h-13l-2-2z" stroke="#f08a8a" /><path d="M12.500 750v4.500h9v-4.500M13.500 763v-4.500h7v4.500M16 760v3" stroke="#f08a8a" /><Sep x={30} y={748} h={17} /></g>]]} />
        <div className="w-[145px] shrink-0 pt-[4px] tracking-[-0.5px]">Sheet 1 of 1</div>
        <div className="h-[17px] w-[250px] shrink-0 border-r border-l border-[#2a2a2a]" />
        <div className="w-[9px] shrink-0" />
        <div className="w-[173px] shrink-0 pt-[4px] tracking-[-0.45px]">Default</div>
        <div className="w-[187px] shrink-0 pt-[4px]">English (USA)</div>
        <Strip
          from={803}
          top={745}
          h={23}
          items={[
            [880, <g><Sep x={803} y={748} h={17} /><rect x="813.500" y="752.500" width="16" height="9" stroke={B} /><path d="M834 749.500h7M834 764.500h7M837.500 750v14" strokeWidth="1.600" /><Sep x={848} y={748} h={17} /><Sep x={877} y={748} h={17} /></g>],
          ]}
        />
        <div className="w-[293px] shrink-0 border-r border-[#2a2a2a] pt-[4px] pl-[100px] tracking-[-0.38px]">Average: ; Sum: 0</div>
        <Strip
          from={1173}
          top={745}
          h={23}
          items={[
            [1196, <path d="M1184 757.500h10" strokeWidth="2.500" />],
            [1299, <g><path d="M1199 757.500h97" stroke="#858585" strokeWidth="1.800" /><path d="M1247.500 755v5" stroke="#858585" strokeWidth="2" /><rect x="1227.500" y="752.500" width="3" height="9" fill="#55554e" stroke={W} /></g>],
            [1315, <path d="M1301 757.500h10M1306 752.500v10" strokeWidth="2.500" />],
            [1329, <Sep x={1317} y={748} h={17} />],
          ]}
        />
        <div className="pt-[4px]">71%</div>
      </div>
    </div>
  );
}
